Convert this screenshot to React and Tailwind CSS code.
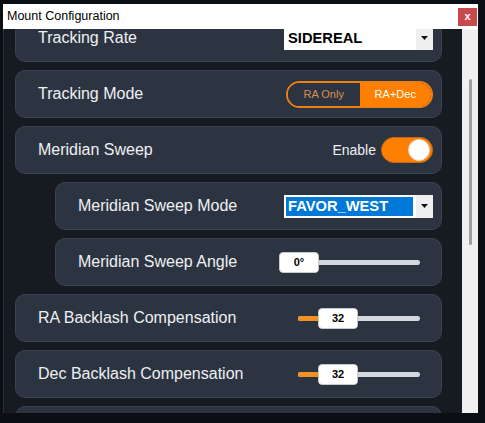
import React from "react";

const font = { fontFamily: '"Liberation Sans", Arial, sans-serif' };

function Card({ indent, label, children }) {
  return (
    <div
      className={`flex h-[48px] shrink-0 items-center justify-between rounded-[10px] border border-[#3b4250] bg-[#2d3441] pl-[22px] pr-[8px] ${
        indent ? "ml-[40px]" : ""
      }`}
    >
      <span className="text-[16px] text-[#eef0f3]">{label}</span>
      {children}
    </div>
  );
}

function Select({ value, selected }) {
  return (
    <div className="flex h-[23px] w-[149px] items-center bg-white">
      <div className="flex flex-1 items-center pl-[2px]">
        <span
          className={`text-[14.7px] font-bold leading-[19px] ${
            selected ? "w-[127px] bg-[#0078d7] pl-[2px] text-white" : "pl-[2px] text-black"
          }`}
        >
          {value}
        </span>
      </div>
      <div className="flex h-full w-[17px] items-center justify-center bg-[#efefef]">
        <svg width="7" height="4" viewBox="0 0 7 4">
          <path d="M0 0h7L3.5 4z" fill="#111" />
        </svg>
      </div>
    </div>
  );
}

function Slider({ width, thumbLeft, fill, value }) {
  return (
    <div className="relative h-[21px]" style={{ width }}>
      <div className="absolute left-0 right-0 top-[8px] h-[5px] rounded-full bg-[#d4d7dc]" />
      {fill ? (
        <div
          className="absolute left-0 top-[8px] h-[5px] rounded-l-full bg-[#f39222]"
          style={{ width: thumbLeft + 4 }}
        />
      ) : null}
      <div
        className="absolute top-0 flex h-[21px] w-[40px] items-center justify-center rounded-[4px] border border-[#c9cdd3] bg-white text-[11px] font-bold text-black shadow-[0_0_1px_rgba(0,0,0,0.4)]"
        style={{ left: thumbLeft }}
      >
        {value}
      </div>
    </div>
  );
}

export default function App() {
  return (
    <div className="h-[423px] w-[485px] overflow-hidden bg-[#0b0e13] pl-[3px] pt-[4px]" style={font}>
      <div className="flex h-[409px] w-[475px] flex-col">
        <div className="flex h-[25px] shrink-0 items-center justify-between bg-white pl-[4px] pr-[1px]">
          <span className="text-[12.5px] text-black">Mount Configuration</span>
          <div className="flex h-[18px] w-[19px] items-center justify-center bg-[#c94a4d] text-[11px] font-bold leading-none text-white">
            x
          </div>
        </div>
        <div className="flex min-h-0 flex-1 border-l border-[#2a2f38] bg-[#161a21]">
          <div className="min-h-0 flex-1 overflow-hidden">
            <div className="ml-[11px] mt-[-15px] flex w-[427px] flex-col gap-[8px]">
              <Card label="Tracking Rate">
                <Select value="SIDEREAL" />
              </Card>
              <Card label="Tracking Mode">
                <div className="flex h-[27px] w-[147px] overflow-hidden rounded-full border-2 border-[#f07f12] text-[11px]">
                  <div className="flex flex-1 items-center justify-center bg-[#2d3441] text-[#d8904c]">RA Only</div>
                  <div className="flex flex-1 items-center justify-center bg-[#ff7f00] text-white">RA+Dec</div>
                </div>
              </Card>
              <Card label="Meridian Sweep">
                <div className="flex items-center gap-[5px]">
                  <span className="text-[14px] text-[#eef0f3]">Enable</span>
                  <div className="flex h-[26px] w-[52px] items-center justify-end rounded-full border border-[#c86a10] bg-[#ff7f00] pr-[2px]">
                    <div className="h-[22px] w-[22px] rounded-full border border-[#e8d6c0] bg-white" />
                  </div>
                </div>
              </Card>
              <Card indent label="Meridian Sweep Mode">
                <Select value="FAVOR_WEST" selected />
              </Card>
              <Card indent label="Meridian Sweep Angle">
                <div className="pr-[13px]">
                  <Slider width={141} thumbLeft={0} value="0°" />
                </div>
              </Card>
              <Card label="RA Backlash Compensation">
                <div className="pr-[13px]">
                  <Slider width={122} thumbLeft={20} fill value="32" />
                </div>
              </Card>
              <Card label="Dec Backlash Compensation">
                <div className="pr-[13px]">
                  <Slider width={122} thumbLeft={20} fill value="32" />
                </div>
              </Card>
              <Card label="" />
            </div>
          </div>
          <div className="flex w-[16px] justify-center bg-[#f0f0f0] pt-[50px]">
            <div className="h-[166px] w-[3px] rounded-full bg-[#a0a0a0]" />
          </div>
        </div>
      </div>
    </div>
  );
}
